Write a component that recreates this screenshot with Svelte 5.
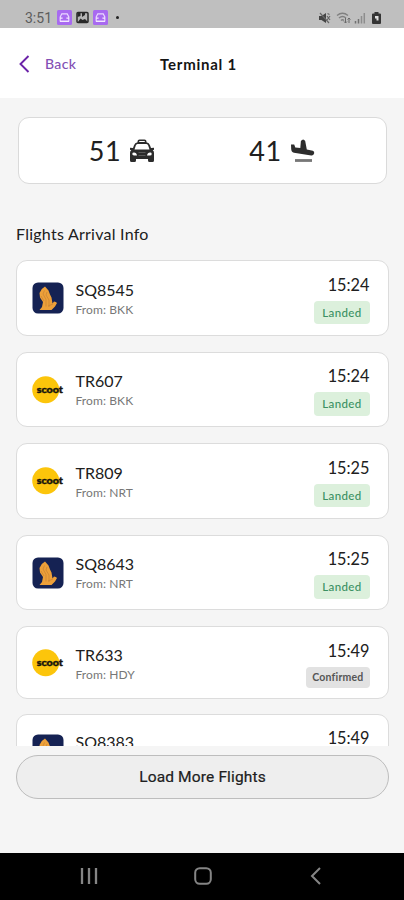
<script>
  const flights = [
    { no: 'SQ8545', from: 'BKK', time: '15:24', status: 'Landed' },
    { no: 'TR607', from: 'BKK', time: '15:24', status: 'Landed' },
    { no: 'TR809', from: 'NRT', time: '15:25', status: 'Landed' },
    { no: 'SQ8643', from: 'NRT', time: '15:25', status: 'Landed' },
    { no: 'TR633', from: 'HDY', time: '15:49', status: 'Confirmed' },
    { no: 'SQ8383', from: '', time: '15:49', status: '' }
  ];
</script>

{#snippet appBadge()}
  <svg width="15" height="15" viewBox="0 0 15 15">
    <rect width="15" height="15" rx="1.5" fill="#a86af0" />
    <path d="M3.2 7 4.8 3.8h5.4L11.8 7v4H3.2z" fill="none" stroke="#ead9ff" stroke-width="1.2" />
    <path d="M3 8.2h2.6M9.4 8.2H12M3 11.5h9" stroke="#f3e8ff" stroke-width="1.2" />
  </svg>
{/snippet}

<div class="screen">
  <div class="status">
    <span class="clock">3:51</span>
    <div class="notes">
      {@render appBadge()}
      <svg width="13" height="13" viewBox="0 0 13 13">
        <rect x="1" y="1.5" width="11" height="10" rx="1" fill="#b5b5b5" stroke="#292929" stroke-width="1.5" />
        <path d="M1.5 2h3v3l-3 1zM6 2h3v2L6 6zM2 11l2.500-3.500L6.500 9 9 8l3 3z" fill="#292929" />
      </svg>
      {@render appBadge()}
    </div>
    <span class="dot"></span>
    <div class="signals">
      <svg width="13" height="12" viewBox="0 0 13 12">
        <path d="M1 4h2.500L8 1v10L3.500 8H1z" fill="#444" />
        <path d="M2 1l9 10M9 4l3 4M12 4L9 8M9.500 1.500l2 1" stroke="#666" stroke-width="1.200" fill="none" />
      </svg>
      <svg width="15" height="12" viewBox="0 0 15 12">
        <path d="M1 3.500Q6.500-1 12 3.500M3 6q3.500-3 7 0M5 8.500q1.500-1.300 3 0" stroke="#808080" stroke-width="1.400" fill="none" />
        <path d="M9.500 6v5M8 9.500l1.500 1.500L11 9.500M13 11V6M11.500 7.500L13 6l1.500 1.500" stroke="#6a6a6a" fill="none" />
      </svg>
      <svg width="12" height="12" viewBox="0 0 12 12">
        <path d="M1.500 9v2.500M4.500 7v4.500" stroke="#707070" stroke-width="1.500" />
        <path d="M7.500 4v7.500M10.300 1v10.500" stroke="#8d8d8d" stroke-width="1.500" />
      </svg>
      <svg class="battery" width="9" height="12" viewBox="0 0 9 12">
        <path d="M2.500 1.500V0h4v1.500H8a1 1 0 0 1 1 1V11a1 1 0 0 1-1 1H1a1 1 0 0 1-1-1V2.500a1 1 0 0 1 1-1z" fill="#343434" />
        <path d="M3 4h3.500v4.500H4.500V6.500H3z" fill="#dedede" />
      </svg>
    </div>
  </div>

  <header>
    <div class="back">
      <svg width="11" height="18" viewBox="0 0 11 18">
        <path d="M9.500 1L1.500 9l8 8" fill="none" stroke="#6b22a8" stroke-width="1.900" />
      </svg>
      <span>Back</span>
    </div>
    <h1>Terminal 1</h1>
  </header>

  <div class="summary">
    <div class="count taxis">
      <span>51</span>
      <svg width="26" height="24" viewBox="0 0 26 24">
        <path fill="#2c2c2c" fill-rule="evenodd" d="M8.500 3.300V2.500Q8.500.5 10.500.5h5q2 0 2 2v.8q2.700.3 3.500 3L22 9l3-.3v2l-1.300.5Q25 12 25 14v7.500q0 1.500-1.500 1.500h-3q-1.500 0-1.500-1.500V20H7v1.500Q7 23 5.500 23h-3Q1 23 1 21.500V14q0-2 1.300-2.800L1 10.700v-2L4 9l1-2.700q.8-2.700 3.500-3zM10 3h6q0-1-1-1h-4q-1 0-1 1zM8.500 5Q7.200 5 6.800 6.500L5.500 10.500h15l-1.300-4Q18.800 5 17.500 5zM5 13.500q-1.700 0-1.700 1.400T5 16.500h3Q7.500 13.500 5 13.500zM21 13.500q-2.500 0-3 3h3q1.700 0 1.700-1.600T21 13.500z" />
        <path d="M9.500 13.500h7M9.500 16.500h7" stroke="#666" stroke-width=".8" />
      </svg>
    </div>
    <div class="count planes">
      <span>41</span>
      <svg width="25" height="25" viewBox="0 0 25 25">
        <path d="M1 6.500h3.200L5.300 9.500l5 .5L10.900 3q2.300-3 4.300 0l1.600 8.500 6 1.200q1.800.7 1.400 2.500-.8 2.500-3 2.200L4 14.700Q1.200 14 1.200 11z" fill="#2d2d2d" />
        <path d="M5 22.500h17" stroke="#777" stroke-width="2.800" />
      </svg>
    </div>
  </div>

  <h2>Flights Arrival Info</h2>

  <div class="list">
    {#each flights as f}
      <article>
        {#if f.no.startsWith('SQ')}
          <svg class="logo" width="32" height="32" viewBox="0 0 32 32">
            <rect x=".5" y=".5" width="31" height="31" rx="5.500" fill="#152253" />
            <path d="M13 4.500l3.500 4 1.500 4 1.500 3 1 6 1.500-2 1.800.5 1.200 1-2 3.500-3.500 3.500H7.500L10 25l1-5-3-4.500L7.500 11l2.300-4z" fill="#eda039" />
            <path d="M12.500 8.500L11 12l3 5.500v7M15 10l-1 3 3 5v7M9 14l3 5M16 24l5-2" fill="none" stroke="#c78335" stroke-width=".7" />
          </svg>
        {:else}
          <svg class="logo" width="32" height="32" viewBox="0 0 32 32">
            <circle cx="13.700" cy="15.800" r="13.500" fill="#fcc50b" />
            <text x="4.800" y="19" textLength="26" lengthAdjust="spacingAndGlyphs">scoot</text>
          </svg>
        {/if}
        <div class="info">
          <strong>{f.no}</strong>
          <small>{f.from ? `From: ${f.from}` : ''}</small>
        </div>
        <div class="right">
          <time>{f.time}</time>
          <span class="tag" class:grey={f.status !== 'Landed'}>{f.status}</span>
        </div>
      </article>
    {/each}
  </div>

  <button>Load More Flights</button>

  <nav>
    <svg width="18" height="18" viewBox="0 0 18 18"><path d="M2 1v16M9 1v16M16 1v16" stroke="#858585" stroke-width="2.300" /></svg>
    <svg width="18" height="18" viewBox="0 0 18 18"><rect x="1.200" y="1.200" width="15.600" height="15.600" rx="4.500" fill="none" stroke="#858585" stroke-width="2" /></svg>
    <svg width="18" height="18" viewBox="0 0 18 18"><path d="M12 1L4 9l8 8" fill="none" stroke="#858585" stroke-width="2" /></svg>
  </nav>
</div>

<style>
  .screen {
    width: 404px;
    height: 900px;
    display: flex;
    flex-direction: column;
    overflow: hidden;
    background: #f5f5f5;
    color: #202020;
    font-family: Lato, "Liberation Sans", sans-serif;
  }
  svg { display: block; flex: none; }
  .status {
    height: 28px;
    flex: none;
    box-sizing: border-box;
    padding: 7px 23px 0 25px;
    display: flex;
    align-items: center;
    background: #bfbfbf;
  }
  .clock { width: 32px; font: 14px/18px Roboto, sans-serif; color: #5c5c5c; }
  .notes { display: flex; align-items: center; gap: 4px; }
  .dot { width: 3px; height: 3px; margin-left: 8px; border-radius: 50%; background: #222; }
  .signals { display: flex; gap: 5px; margin-left: auto; }
  .signals svg:nth-child(3) { margin-left: -2px; }
  .battery { margin-left: 1px; }
  header {
    height: 70px;
    flex: none;
    display: grid;
    grid-template-columns: 1fr auto 1fr;
    align-items: center;
    background: #fff;
  }
  .back { display: flex; align-items: center; gap: 15px; padding-left: 19px; margin-top: 2px; color: #824fb4; font-size: 14px; line-height: 18px; font-weight: 500; letter-spacing: .35px; }
  h1 { margin: 1px 0 0; padding-right: 7px; font-size: 15px; line-height: 20px; font-weight: 700; letter-spacing: .75px; color: #151515; }
  .summary {
    margin: 19px 17px 0 18px;
    height: 67px;
    flex: none;
    box-sizing: border-box;
    display: flex;
    background: #fff;
    border: 1px solid #dadada;
    border-radius: 11px;
  }
  .count { flex: 1; display: flex; align-items: center; justify-content: center; font-size: 27px; letter-spacing: .5px; }
  .taxis { gap: 8px; padding-left: 23px; }
  .planes { gap: 8px; padding-right: 24px; }
  h2 { margin: 40px 0 16px 16px; flex: none; font-size: 16px; line-height: 20px; font-weight: 400; letter-spacing: .25px; }
  .list { height: 486px; flex: none; padding: 0 15px 0 16px; overflow: hidden; }
  article {
    box-sizing: border-box;
    display: flex;
    align-items: center;
    height: 75.500px;
    padding: 1px 18.500px 0 15px;
    margin-bottom: 16px;
    background: #fff;
    border: 1px solid #dcdcdc;
    border-radius: 11px;
  }
  article:nth-child(5) { height: 73px; margin-bottom: 15px; }
  article:nth-child(6) { height: 71px; }
  .logo text { font: 900 10px Lato, sans-serif; fill: #17150c; stroke: #17150c; stroke-width: .5px; }
  .info { display: flex; flex-direction: column; margin-left: 11.500px; padding-top: 1px; }
  strong { font-size: 16px; line-height: 20px; font-weight: 400; }
  small { height: 18px; font-size: 12px; line-height: 19px; letter-spacing: .1px; color: #777; }
  .right { margin-left: auto; display: flex; flex-direction: column; align-items: flex-end; }
  time { font-size: 16.300px; line-height: 24px; }
  .tag {
    box-sizing: border-box;
    height: 23.500px;
    margin-top: 4px;
    padding: 0 8px;
    border-radius: 4px;
    font-size: 11.500px;
    line-height: 24px;
    font-weight: 500;
    letter-spacing: .35px;
    color: #3b9163;
    background: #dcf0dc;
  }
  .tag.grey { height: 21px; padding: 0 6px; font-size: 10.500px; line-height: 21px; font-weight: 700; letter-spacing: .2px; color: #555; background: #e2e2e2; }
  button {
    margin: 9px 15px 0 16px;
    height: 44px;
    flex: none;
    padding: 0;
    border: 1px solid #bdbdbd;
    border-radius: 22px;
    background: #eee;
    color: #202020;
    font: 400 15.500px Roboto, sans-serif;
    letter-spacing: .15px;
    -webkit-text-stroke: .2px #202020;
  }
  nav {
    margin-top: auto;
    height: 47px;
    flex: none;
    box-sizing: border-box;
    padding: 0 78px 1px 80px;
    display: flex;
    align-items: center;
    justify-content: space-between;
    background: #000;
  }
</style>
